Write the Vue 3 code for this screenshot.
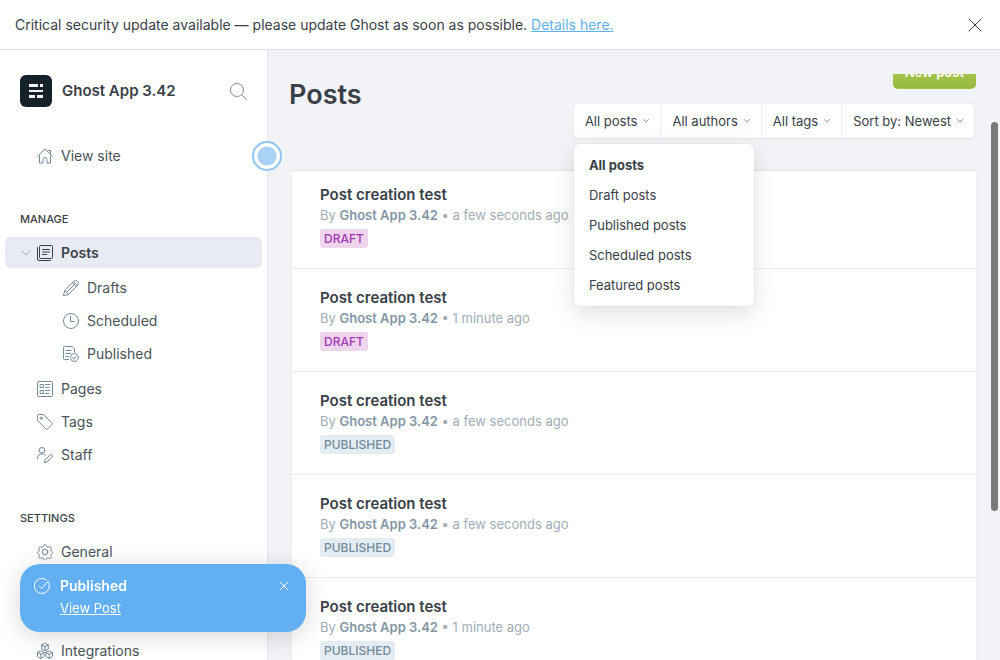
<script setup>
import { ref } from 'vue'

const filters = ['All posts', 'All authors', 'All tags', 'Sort by: Newest']
const options = ['All posts', 'Draft posts', 'Published posts', 'Scheduled posts', 'Featured posts']
const selected = ref('All posts')

const posts = [
  { id: 1, time: 'a few seconds ago', status: 'draft' },
  { id: 2, time: '1 minute ago', status: 'draft' },
  { id: 3, time: 'a few seconds ago', status: 'published' },
  { id: 4, time: 'a few seconds ago', status: 'published' },
  { id: 5, time: '1 minute ago', status: 'published' }
]
</script>

<template>
  <div class="app">
    <aside class="alert">
      <p>Critical security update available — please update Ghost as soon as possible. <a href="#">Details here.</a></p>
      <button class="icon-btn" aria-label="Dismiss alert">
        <svg width="14" height="14" viewBox="0 0 14 14"><path d="M1 1l12 12M13 1L1 13" /></svg>
      </button>
    </aside>

    <div class="body">
      <nav class="sidebar">
        <header class="brand">
          <svg class="logo" width="32" height="32" viewBox="0 0 32 32">
            <rect width="32" height="32" rx="6" fill="#15212a" />
            <g fill="#f3f0f5">
              <rect x="9" y="9" width="9" height="3" /><rect x="20" y="9" width="3" height="3" />
              <rect x="9" y="15" width="14" height="2" />
              <rect x="9" y="20" width="6" height="3" /><rect x="17" y="20" width="6" height="3" />
            </g>
          </svg>
          <strong>Ghost App 3.42</strong>
          <button class="icon-btn search" aria-label="Search">
            <svg width="17" height="17" viewBox="0 0 17 17"><circle cx="7" cy="7" r="6.500" /><path d="M11.700 11.700l4.800 4.800" /></svg>
          </button>
        </header>

        <ul class="nav view">
          <li><a href="#">
            <svg width="16" height="16" viewBox="0 0 16 16"><path d="M.5 8.500L8 1l7.500 7.500M2.500 8v7h3.500v-3.500a2 2 0 0 1 4 0V15h3.500V8M11.500 2.500h2v3" /></svg>
            View site</a></li>
        </ul>

        <h4>Manage</h4>
        <ul class="nav">
          <li class="group">
            <a href="#" class="active">
              <svg class="chevron" width="10" height="6" viewBox="0 0 10 6"><path d="M.5.5L5 5 9.500.5" /></svg>
              <svg width="16" height="16" viewBox="0 0 16 16"><rect x="2.500" y=".5" width="13" height="13" rx="1" /><path d="M.5 2.500V14a1.500 1.500 0 0 0 1.500 1.500h11.500M5.500 4.500h7M5.500 7h7M5.500 9.500h4" /></svg>
              Posts</a>
            <ul class="sub">
              <li><a href="#">
                <svg width="16" height="16" viewBox="0 0 16 16"><path d="M.5 15.500l1.200-5L11 1.200a2.300 2.300 0 0 1 3.400 0l.4.4a2.300 2.300 0 0 1 0 3.400L5.500 14.300zM1.700 10.500l3.800 3.800M9.500 2.700l3.800 3.800M3.600 12.400l7.800-7.800M10.500 1.700l3.800 3.800" /></svg>
                Drafts</a></li>
              <li><a href="#">
                <svg width="16" height="16" viewBox="0 0 16 16"><circle cx="8" cy="8" r="7.500" /><path d="M7.500 3.500v5H11" /></svg>
                Scheduled</a></li>
              <li><a href="#">
                <svg width="16" height="16" viewBox="0 0 16 16"><path d="M5.500 13.500h-4a1 1 0 0 1-1-1v-11a1 1 0 0 1 1-1H9L11.500 3v3M3 4.500h5M3 7.500h4.500M3 10.500h2.500" /><circle cx="11.500" cy="11.500" r="4" /><path d="M9.500 11.700l1.500 1.300 2.500-3" /></svg>
                Published</a></li>
            </ul>
          </li>
          <li><a href="#">
            <svg width="16" height="16" viewBox="0 0 16 16"><rect x=".5" y=".5" width="15" height="15" rx="1" /><path d="M3.500 3.500h3v3h-3zM3.500 9.500h3v3h-3zM8.500 3.500H13M8.500 6.500H12M8.500 9.500H13M8.500 12.500H12" /></svg>
            Pages</a></li>
          <li><a href="#">
            <svg width="16" height="16" viewBox="0 0 16 16"><path d="M.5 1.500a1 1 0 0 1 1-1h5L15 9a1 1 0 0 1 0 1.400L10.500 15a1 1 0 0 1-1.400 0L.5 6.500z" /><circle cx="4.200" cy="4.200" r="1.100" /></svg>
            Tags</a></li>
          <li><a href="#">
            <svg width="16" height="16" viewBox="0 0 16 16"><circle cx="5" cy="3.300" r="2.800" /><path d="M.5 11.500C.5 8.500 2.500 7 5 7c1.500 0 2.500.4 3.300 1.200M7.500 15.500l.7-2.700 4.900-4.900a1.400 1.400 0 0 1 2 2L10.200 14.800z" /></svg>
            Staff</a></li>
        </ul>

        <h4>Settings</h4>
        <ul class="nav settings">
          <li><a href="#">
            <svg width="16" height="16" viewBox="0 0 16 16"><circle cx="8" cy="8" r="2.800" /><path d="M6.600 1.600a1.500 1.500 0 0 1 2.800 0l.4 1.100a1 1 0 0 0 1.300.6l1.200-.5a1.500 1.500 0 0 1 1.900 1.900l-.5 1.200a1 1 0 0 0 .6 1.300l.4.100a1.500 1.500 0 0 1 0 2.600l-.4.200a1 1 0 0 0-.6 1.300l.5 1a1.500 1.500 0 0 1-1.900 1.900l-1.200-.5a1 1 0 0 0-1.300.5l-.4 1.100a1.500 1.500 0 0 1-2.800 0l-.4-1.100a1 1 0 0 0-1.300-.5l-1.200.5a1.500 1.500 0 0 1-1.900-1.900l.5-1a1 1 0 0 0-.6-1.300l-.4-.2a1.500 1.500 0 0 1 0-2.600l.4-.1a1 1 0 0 0 .6-1.300l-.5-1.200a1.500 1.500 0 0 1 1.900-1.900l1.200.5a1 1 0 0 0 1.300-.6z" /></svg>
            General</a></li>
          <li><a href="#">
            <svg width="16" height="16" viewBox="0 0 16 16"><path d="M8 .5L11.300 2v4L8 7.500 4.700 6V2zM4.700 2L8 3.700 11.300 2M8 3.700v3.800M3.800 8l3.300 1.500v4L3.800 15.500.5 13.500v-4zM.5 9.500l3.300 1.700 3.300-1.700M3.800 11.200v4.300M12.200 8l3.300 1.500v4l-3.300 2-3.300-2v-4zM8.900 9.500l3.300 1.700 3.300-1.700M12.200 11.200v4.300" /></svg>
            Integrations</a></li>
        </ul>
        <button class="beacon" aria-label="Open tip"></button>
      </nav>

      <main class="main">
        <header class="top">
          <h1>Posts</h1>
          <div class="actions">
            <div class="clip"><button class="new">New post</button></div>
            <div class="filters">
              <button v-for="f in filters" :key="f">{{ f }}
                <svg width="6" height="4" viewBox="0 0 6 4"><path d="M.5.5L3 3.200 5.500.5" /></svg>
              </button>
              <ul class="menu">
                <li v-for="o in options" :key="o">
                  <button :class="{ on: o === selected }" @click="selected = o">{{ o }}</button>
                </li>
              </ul>
            </div>
          </div>
        </header>

        <ol class="posts">
          <li v-for="p in posts" :key="p.id">
            <h3><a href="#">Post creation test</a></h3>
            <p>By <b>Ghost App 3.42</b> • {{ p.time }}</p>
            <span class="badge" :class="p.status">{{ p.status }}</span>
          </li>
        </ol>
        <div class="scroll"></div>
      </main>
    </div>

    <aside class="toast">
      <svg width="16" height="16" viewBox="0 0 16 16"><path d="M14.800 5A7.500 7.500 0 1 1 12.500 2M4.500 7.500L7.500 10.500 14.500 3" /></svg>
      <div>
        <strong>Published</strong>
        <a href="#">View Post</a>
      </div>
      <button class="icon-btn" aria-label="Close notification">
        <svg width="10" height="10" viewBox="0 0 10 10"><path d="M1 1l8 8M9 1L1 9" /></svg>
      </button>
    </aside>
  </div>
</template>

<style>
body { margin: 0; }
</style>

<style scoped>
.app {
  display: flex;
  flex-direction: column;
  height: 100vh;
  overflow: hidden;
  font: 14px/20px Inter, "Liberation Sans", sans-serif;
  color: #394047;
}
ul, ol, h1, h3, h4, p { margin: 0; padding: 0; list-style: none; }
button { font: inherit; color: inherit; border: 0; background: none; padding: 0; cursor: pointer; }
a { color: inherit; text-decoration: none; }
svg { display: block; flex: none; fill: none; stroke: currentColor; stroke-linecap: round; stroke-linejoin: round; }
.alert {
  flex: none;
  display: flex;
  align-items: center;
  justify-content: space-between;
  height: 49px;
  padding: 0 18px 0 15px;
  border-bottom: 1px solid #dae0e3;
  background: #fff;
}
.alert a { color: #62b0ec; text-decoration: underline; }
.body { flex: 1; display: flex; min-height: 0; }
.sidebar {
  position: relative;
  z-index: 1;
  flex: none;
  box-sizing: border-box;
  width: 268px;
  border-right: 1px solid #e3e7ef;
  background: #fff;
}
.brand { display: flex; align-items: center; gap: 10px; padding: 25px 20px 0 20px; }
.brand strong { flex: 1; font-size: 15px; font-weight: 600; }
.logo { stroke: none; }
.search { color: #7c8b9a; }
.view { padding-top: 32px; }
h4 { padding: 37px 20px 0; font-size: 11px; line-height: 20px; font-weight: 500; text-transform: uppercase; }
.nav { color: #4a5358; }
h4 + .nav { padding-top: 8px; }
h4 + .settings { padding-top: 7px; }
.nav a { display: flex; align-items: center; gap: 8px; height: 33px; padding-left: 37px; }
.nav svg { color: #738a99; }
.nav a.active {
  gap: 8px;
  height: 31px;
  margin: 0 5px;
  padding-left: 16px;
  border-radius: 5px;
  background: #e8ebf3;
  color: #394047;
  font-weight: 600;
}
.nav .active svg { color: #394047; }
.nav .active .chevron { color: #a0afba; margin-right: -2px; }
.sub { padding: 3px 0 2px; }
.nav .sub a { padding-left: 63px; }
.settings li + li { margin-top: 66px; }
.beacon {
  position: absolute;
  top: 91px;
  right: -15px;
  width: 30px;
  height: 30px;
  border: 2px solid #8fc5f2;
  border-radius: 50%;
  background: radial-gradient(circle, #a9d2f5 9px, #fff 10px);
}
.main { position: relative; flex: 1; min-width: 0; padding: 24px 24px 0; background: #f2f3f7; }
.top { display: flex; justify-content: space-between; height: 96px; margin-left: -3px; }
h1 { font-size: 27px; line-height: 42px; font-weight: 600; }
.actions { display: flex; flex-direction: column; align-items: flex-end; gap: 15px; }
.clip { display: flex; align-items: flex-end; height: 15px; overflow: hidden; }
.new {
  flex: none;
  height: 34px;
  padding: 0 12px;
  border-radius: 5px;
  background: linear-gradient(#b1cf5c, #98b93f);
  border-bottom: 1px solid #9fc93a;
  color: #fff;
  font-size: 13px;
  font-weight: 600;
}
.filters { position: relative; display: flex; margin-right: 2px; border-radius: 4px; background: #fff; box-shadow: 0 0 1px rgba(0,0,0,.15), 0 1px 2px rgba(0,0,0,.06); font-size: 13px; }
.filters > button { display: flex; align-items: center; gap: 6px; height: 34px; padding: 0 11px; }
.filters > button + button { border-left: 1px solid #edeff3; }
.filters > button svg { color: #8b98a3; }
.menu {
  position: absolute;
  z-index: 2;
  top: 40px;
  left: 0;
  width: 180px;
  padding: 6px 0;
  border-radius: 5px;
  background: #fff;
  box-shadow: 0 0 1px rgba(0,0,0,.25), 0 8px 24px rgba(0,0,0,.12);
}
.menu button { display: block; width: 100%; height: 30px; padding: 0 15px; text-align: left; }
.menu .on { font-weight: 700; }
.posts { border-top: 1px solid #dfe9ee; background: #fff; box-shadow: 0 0 1px rgba(0,0,0,.12); }
.posts li { box-sizing: border-box; height: 103px; padding: 19px 28px 0; border-bottom: 1px solid #e5eff5; }
.posts li:first-child { height: 98px; padding-top: 14px; }
h3 { font-size: 15px; line-height: 20px; font-weight: 600; }
.posts p { margin-top: 1px; color: #a1adb7; font-size: 13px; line-height: 18px; }
.posts b { color: #8496a5; font-weight: 600; }
.badge { display: block; width: fit-content; margin-top: 5px; padding: 0 4px; border-radius: 3px; font-size: 12px; line-height: 19px; font-weight: 500; text-transform: uppercase; }
.badge.draft { background: #edd5ed; color: #a336b5; }
.badge.published { background: #e5edf4; color: #738a99; }
.scroll { position: absolute; top: 72px; right: 2px; width: 7px; height: 389px; border-radius: 4px; background: #797a7c; }
.toast {
  position: fixed;
  z-index: 3;
  left: 20px;
  bottom: 28px;
  display: flex;
  align-items: flex-start;
  gap: 10px;
  box-sizing: border-box;
  width: 286px;
  padding: 12px 17px 14px 14px;
  border-radius: 20px;
  background: #62b0f3;
  box-shadow: 0 4px 24px rgba(0,0,0,.16);
  color: #fff;
}
.toast > svg { margin-top: 2px; }
.toast div { flex: 1; }
.toast strong { display: block; font-weight: 600; }
.toast a { display: block; width: fit-content; margin-top: 2px; font-size: 13px; text-decoration: underline; }
.toast .icon-btn { margin-top: 5px; }
</style>
